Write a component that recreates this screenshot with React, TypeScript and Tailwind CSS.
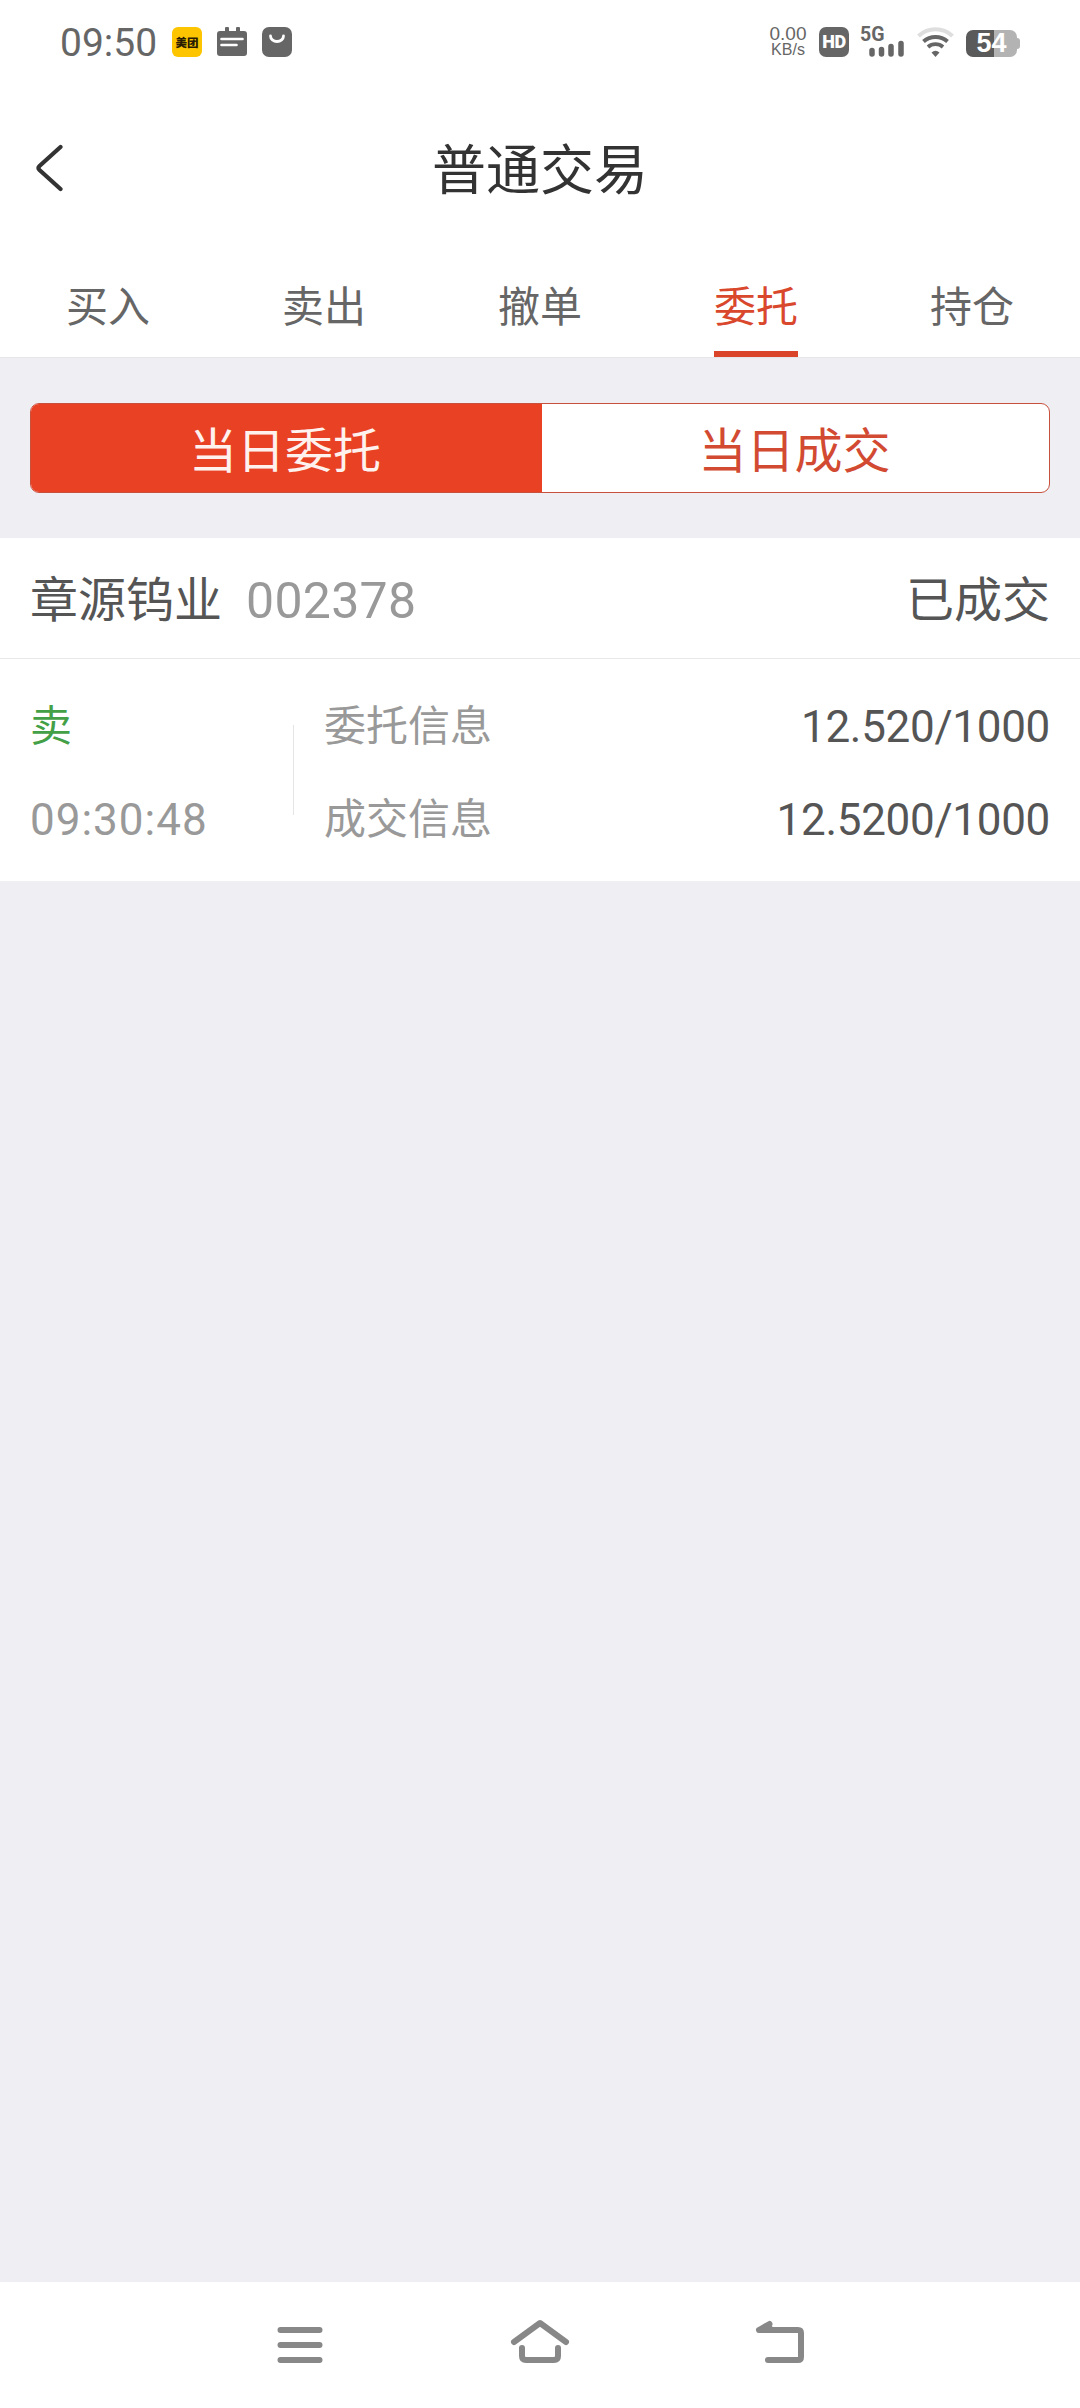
import clsx from 'clsx'

const tabs = ['买入', '卖出', '撤单', '委托', '持仓']

function StatusBar() {
  return (
    <div className="flex h-[84px] items-center justify-between px-[60px] text-[#666666]">
      <div className="flex items-center">
        <span className="w-[112px] pt-[2px] font-['Roboto',sans-serif] text-[39px] leading-[82px]">09:50</span>
        <div className="flex gap-[15px]">
          <div className="flex h-[30px] w-[30px] items-center justify-center rounded-md bg-[#fdc500]">
            <span className="font-['Noto_Sans_CJK_SC',sans-serif] text-[11.5px] leading-[30px] font-black text-[#2a1c00]">
              美团
            </span>
          </div>
          {/* calendar */}
          <svg width="30" height="30" viewBox="0 0 30 30">
            <path
              d="M3 4h5V1.500a1.500 1.500 0 0 1 4 0V4h7V1.500a1.500 1.500 0 0 1 4 0V4h4a3 3 0 0 1 3 3v19a3 3 0 0 1-3 3H3a3 3 0 0 1-3-3V7a3 3 0 0 1 3-3Z"
              fill="currentColor"
            />
            <path d="M4.500 12h21M4.500 18h15" stroke="white" strokeWidth="2.600" strokeLinecap="round" />
          </svg>
          {/* shopping bag */}
          <svg width="30" height="30" viewBox="0 0 30 30">
            <rect width="30" height="30" rx="7" fill="currentColor" />
            <path d="M8.500 9a6.500 5.500 0 0 0 13 0" fill="none" stroke="white" strokeWidth="2.800" strokeLinecap="round" />
          </svg>
        </div>
      </div>

      <div className="flex items-center">
        <div className="flex w-[38px] flex-col items-center font-['Liberation_Sans',sans-serif]">
          <span className="text-[19px] leading-[16px]">0.00</span>
          <span className="text-[16px] leading-[16px]">KB/s</span>
        </div>
        <div className="ml-[12px] flex h-[30px] w-[30px] items-center justify-center rounded-[7px] bg-[#666666]">
          <span className="font-['Roboto',sans-serif] text-[18px] leading-[30px] font-black tracking-[-0.5px] text-white">
            HD
          </span>
        </div>
        <div className="ml-[11px] flex h-[30px] w-[46px] flex-col">
          <span className="h-[15px] font-['Roboto',sans-serif] text-[19.5px] leading-[16px] font-bold">5G</span>
          <svg width="46" height="15" viewBox="0 0 46 15" className="overflow-visible">
            <path
              d="M12 8.500v3.500M21.500 7.500v4.500M31 4.500v7.500M41 1.500v10.500"
              stroke="currentColor"
              strokeWidth="5.500"
              strokeLinecap="round"
            />
          </svg>
        </div>
        <svg width="38" height="30" viewBox="0 0 38 30" className="ml-[11px]" fill="none">
          <path d="M1.500 9a25 25 0 0 1 34 0" stroke="#dedede" strokeWidth="4" />
          <path d="M6.500 14.500a18 18 0 0 1 24 0" stroke="currentColor" strokeWidth="4" />
          <path d="M11 20a11.500 11.500 0 0 1 15 0" stroke="currentColor" strokeWidth="3.800" />
          <path d="M14.500 25.500q4-3.500 8 0l-4 4.500Z" fill="currentColor" />
        </svg>
        <div className="ml-[11px] flex items-center pt-[3px]">
          <div className="flex h-[27px] w-[51px] items-center justify-center rounded-[7px] bg-linear-to-r from-[#5a5a5a] from-[28px] to-[#b3b3b3] to-[28px]">
            <span className="font-['Liberation_Sans',sans-serif] text-[27px] leading-[27px] font-bold text-white">54</span>
          </div>
          <div className="h-[11px] w-[3px] rounded-r-[3px] bg-[#b3b3b3]" />
        </div>
      </div>
    </div>
  )
}

function Header() {
  return (
    <header className="grid h-[166px] grid-cols-3 items-center text-[#333333]">
      <svg width="30" height="50" viewBox="0 0 30 50" fill="none" className="ml-[36px] mt-[2px]">
        <path
          d="M24.500 4 3.500 23q-2 2 0 4L24.500 46"
          stroke="currentColor"
          strokeWidth="4.200"
          strokeLinecap="round"
        />
      </svg>
      <h1 className="text-center text-[54px] leading-[80px]">普通交易</h1>
    </header>
  )
}

function Tabs() {
  return (
    <nav className="grid h-[108px] grid-cols-5 border-b border-[#e6e6e8]">
      {tabs.map((tab) => (
        <div key={tab} className="flex justify-center">
          <span
            className={clsx(
              'h-[107px] w-[84px] text-center text-[42px] leading-[107px]',
              tab === '委托' ? 'border-b-[6px] border-[#da452a] text-[#d9472c]' : 'text-[#666666]',
            )}
          >
            {tab}
          </span>
        </div>
      ))}
    </nav>
  )
}

function OrderCard() {
  return (
    <section className="bg-white">
      <div className="flex h-[121px] justify-between overflow-hidden border-b border-[#e8e8e8] px-[30px] text-[48px] leading-[116px] text-[#555555]">
        <div className="flex">
          <span>章源钨业</span>
          <span className="ml-[24px] font-['Roboto',sans-serif] text-[50px] leading-[127px] tracking-[0.3px] text-[#999999]">
            002378
          </span>
        </div>
        <span>已成交</span>
      </div>
      <div className="flex h-[222px] items-center px-[30px] text-[42px] leading-[91px] text-[#999999]">
        <div className="flex w-[263px] flex-col">
          <span className="h-[93px] text-[#43a047]">卖</span>
          <span className="h-[93px] font-['Roboto',sans-serif] text-[44px] leading-[101px] tracking-[1px]">09:30:48</span>
        </div>
        <div className="h-[90px] w-px bg-[#e5e5e5]" />
        <div className="flex flex-1 flex-col pl-[30px]">
          <div className="flex h-[93px] justify-between">
            <span>委托信息</span>
            <span className="font-['Roboto',sans-serif] text-[44px] leading-[101px] tracking-[-0.3px] text-[#555555]">
              12.520/1000
            </span>
          </div>
          <div className="flex h-[93px] justify-between">
            <span>成交信息</span>
            <span className="font-['Roboto',sans-serif] text-[44px] leading-[101px] tracking-[-0.3px] text-[#555555]">
              12.5200/1000
            </span>
          </div>
        </div>
      </div>
    </section>
  )
}

function NavigationBar() {
  return (
    <footer className="flex h-[126px] items-center justify-between bg-white px-[270px] text-[#888888]">
      <svg width="60" height="60" viewBox="0 0 60 60" fill="none">
        <path d="M10.500 15h39M10.500 30h39M10.500 45h39" stroke="currentColor" strokeWidth="6" strokeLinecap="round" />
      </svg>
      <svg width="60" height="60" viewBox="0 0 60 60" fill="none" stroke="currentColor" strokeWidth="6" strokeLinecap="round" strokeLinejoin="round">
        <path d="M4 27 30 8 56 27M12 33v8q0 4 4 4h28q4 0 4-4v-8" />
      </svg>
      <svg width="60" height="60" viewBox="0 0 60 60" fill="none" stroke="currentColor" strokeWidth="6" strokeLinecap="round" strokeLinejoin="round">
        <path d="M19.500 9 9 15h39q3 0 3 3v24q0 3-3 3H18M9 15l10.500-2.500" />
      </svg>
    </footer>
  )
}

export default function App() {
  return (
    <div className="flex h-[2408px] w-[1080px] flex-col bg-[#efeef3] font-['Noto_Sans_CJK_SC',sans-serif]">
      <div className="bg-white">
        <StatusBar />
        <Header />
        <Tabs />
      </div>

      <div className="px-[30px] pt-[45px] pb-[45px]">
        <div className="flex h-[90px] overflow-hidden rounded-[9px] border border-[#c8513d] bg-white text-center text-[48px] leading-[86px]">
          <div className="w-[511px] bg-[#e84124] pr-[3px] text-[#fff1ee]">当日委托</div>
          <div className="flex-1 pr-[2px] text-[#d24a32]">当日成交</div>
        </div>
      </div>

      <OrderCard />
      <div className="flex-1" />
      <NavigationBar />
    </div>
  )
}
